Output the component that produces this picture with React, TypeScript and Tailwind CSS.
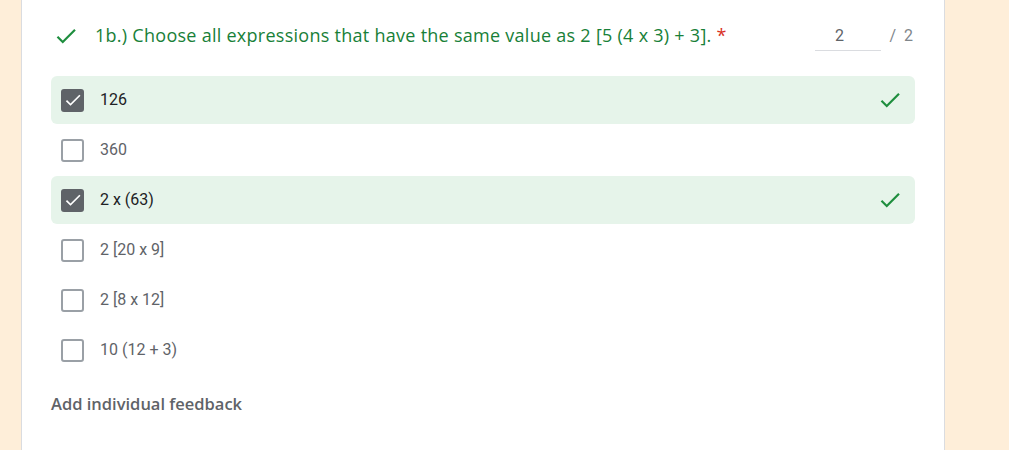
import React from "react";

const options = [
  { label: "126", checked: true },
  { label: "360", checked: false },
  { label: "2 x (63)", checked: true },
  { label: "2 [20 x 9]", checked: false },
  { label: "2 [8 x 12]", checked: false },
  { label: "10 (12 + 3)", checked: false },
];

function Check({ className }: { className?: string }) {
  return (
    <svg viewBox="0 0 24 24" className={className} fill="currentColor">
      <path d="M9 16.17 4.83 12l-1.42 1.41L9 19 21 7l-1.41-1.41z" />
    </svg>
  );
}

function Box({ checked }: { checked: boolean }) {
  if (checked) {
    return (
      <div className="w-[23px] h-[23px] rounded-[3px] bg-[#5f6368] flex items-center justify-center">
        <Check className="w-[20px] h-[20px] text-white" />
      </div>
    );
  }
  return <div className="w-[23px] h-[23px] rounded-[3px] border-2 border-[#9aa0a6]" />;
}

export default function App() {
  return (
    <div className="w-[1009px] h-[450px] bg-[#feeed9] overflow-hidden" style={{ fontFamily: "Roboto, Arial, sans-serif" }}>
      <div className="ml-[21px] w-[924px] h-[450px] bg-white border-x border-[#dadce0] pl-[29px] pr-[29px]">
        <div className="flex items-start pt-[21px] h-[76px]">
          <Check className="w-[26px] h-[26px] text-[#1e8e3e] ml-[2px] mt-[2px]" />
          <div
            className="ml-[16px] text-[18px] text-[#188038] leading-[28px] tracking-[0.27px] flex-1"
            style={{ fontFamily: "'Open Sans', sans-serif" }}
          >
            1b.) Choose all expressions that have the same value as 2 [5 (4 x 3) + 3].{" "}
            <span className="text-[#d93025]">*</span>
          </div>
          <div className="flex items-start">
            <div className="w-[66px] h-[30px] border-b border-[#dadce0] text-center pr-[18px] text-[16px] text-[#5f6368] leading-[30px]">
              2
            </div>
            <div className="ml-[8px] text-[16px] text-[#80868b] leading-[30px] tracking-[2px]">/ 2</div>
          </div>
        </div>
        <div className="flex flex-col gap-[2px]">
          {options.map((o) => (
            <div
              key={o.label}
              className={`h-[48px] flex items-center pl-[10px] pr-[12px] rounded-[6px] ${o.checked ? "bg-[#e6f4ea]" : ""}`}
            >
              <Box checked={o.checked} />
              <span className={`ml-[16px] text-[16px] flex-1 ${o.checked ? "text-[#202124]" : "text-[#5f6368]"}`}>{o.label}</span>
              {o.checked && <Check className="w-[26px] h-[26px] text-[#1e8e3e]" />}
            </div>
          ))}
        </div>
        <div
          className="mt-[18px] text-[16.5px] font-semibold text-[#5f6368]"
          style={{ fontFamily: "'Open Sans', sans-serif" }}
        >
          Add individual feedback
        </div>
      </div>
    </div>
  );
}
